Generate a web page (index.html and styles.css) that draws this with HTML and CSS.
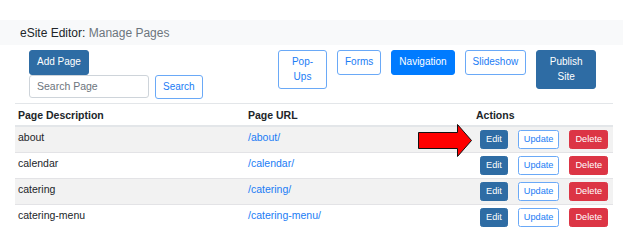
FILE: index.html
```html
<!DOCTYPE html>
<html>
<head>
<meta charset="utf-8">
<title>Manage Pages</title>
<link rel="stylesheet" href="styles.css">
</head>
<body>
<div class="page">
  <div class="topbar"><span class="brand">eSite Editor:</span>&nbsp;<span class="sub">Manage Pages</span></div>
  <div class="toolbar">
    <div class="left">
      <button class="btn btn-dark">Add Page</button>
      <div class="search">
        <input class="search-input" type="text" placeholder="Search Page">
        <button class="btn btn-outline">Search</button>
      </div>
    </div>
    <div class="right">
      <button class="btn btn-outline w-popups">Pop-Ups</button>
      <button class="btn btn-outline">Forms</button>
      <button class="btn btn-primary">Navigation</button>
      <button class="btn btn-outline">Slideshow</button>
      <button class="btn btn-dark w-publish">Publish Site</button>
    </div>
  </div>
  <table class="pages">
    <colgroup><col class="c1"><col class="c2"><col class="c3"></colgroup>
    <thead>
      <tr><th>Page Description</th><th>Page URL</th><th class="th-actions">Actions</th></tr>
    </thead>
    <tbody>
      <tr class="odd"><td>about</td><td><a href="#">/about/</a></td><td class="actions"><div class="acts"><button class="sm sm-dark">Edit</button><button class="sm sm-outline">Update</button><button class="sm sm-danger">Delete</button></div></td></tr>
      <tr><td>calendar</td><td><a href="#">/calendar/</a></td><td class="actions"><div class="acts"><button class="sm sm-dark">Edit</button><button class="sm sm-outline">Update</button><button class="sm sm-danger">Delete</button></div></td></tr>
      <tr class="odd"><td>catering</td><td><a href="#">/catering/</a></td><td class="actions"><div class="acts"><button class="sm sm-dark">Edit</button><button class="sm sm-outline">Update</button><button class="sm sm-danger">Delete</button></div></td></tr>
      <tr><td>catering-menu</td><td><a href="#">/catering-menu/</a></td><td class="actions"><div class="acts"><button class="sm sm-dark">Edit</button><button class="sm sm-outline">Update</button><button class="sm sm-danger">Delete</button></div></td></tr>
    </tbody>
  </table>
  <svg class="arrow" width="55" height="35" viewBox="0 0 55 35">
    <polygon points="0.5,8.5 39.5,8.5 39.5,0.5 53.5,16.5 39.5,32.5 39.5,24.5 0.5,24.5" fill="#ff0000" stroke="#111" stroke-width="1"/>
  </svg>
</div>
</body>
</html>
```
FILE: styles.css
```css
* { box-sizing: border-box; }
body {
  margin: 0;
  font-family: "Liberation Sans", Arial, sans-serif;
  font-size: 10.5px;
  color: #212529;
  background: #fff;
}
.page {
  position: relative;
  padding-top: 20px;
}
.topbar {
  width: 623px;
  height: 25px;
  background: #f8f9fa;
  padding-left: 20px;
  display: flex;
  align-items: center;
  font-size: 12px;
}
.brand { color: #212529; }
.sub { color: #6c757d; }

.toolbar {
  display: flex;
  align-items: flex-start;
  margin-top: 5px;
  padding-left: 29px;
}
.left {
  width: 249px;
  display: flex;
  flex-direction: column;
  align-items: flex-start;
}
.search {
  display: flex;
  gap: 6px;
}
.search-input {
  width: 120px;
  height: 23px;
  border: 1px solid #ced4da;
  border-radius: 3px;
  padding: 0 7px;
  font-family: inherit;
  font-size: 10.5px;
  color: #495057;
  outline: none;
}
.search-input::placeholder { color: #6c757d; }
.right {
  display: flex;
  gap: 10px;
  align-items: flex-start;
}
.btn {
  font-family: inherit;
  font-size: 10px;
  line-height: 14.5px;
  padding: 4px 7px;
  border: 1px solid transparent;
  border-radius: 3px;
  background: #fff;
  text-align: center;
  cursor: pointer;
}
.btn-dark { background: #2e6ca4; border-color: #2e6ca4; color: #fff; }
.btn-primary { background: #007bff; border-color: #007bff; color: #fff; }
.btn-outline { background: #fff; border-color: #6aa9f7; color: #1a7cf5; }
.w-popups { width: 49px; }
.w-publish { width: 60px; }

.pages {
  margin-top: 4px;
  margin-left: 15px;
  width: 598px;
  border-collapse: collapse;
  table-layout: fixed;
}
.c1 { width: 230px; }
.c2 { width: 227px; }
.c3 { width: 141px; }
.pages th {
  text-align: left;
  font-weight: bold;
  line-height: 15px;
  padding: 3px 3px 2px;
  border-top: 1px solid #e3e6e9;
  border-bottom: 2px solid #e3e6e9;
}
.pages th.th-actions { padding-left: 4px; padding-top: 4px; }
.pages td {
  vertical-align: top;
  line-height: 15.75px;
  padding: 3px;
  border-top: 1px solid #e3e3e6;
}
.pages tr.odd td { background: #f2f2f2; }
.pages a { color: #1a7cf5; text-decoration: none; }
.pages td.actions { padding: 3px 3px 3px 8px; }
.acts { display: flex; gap: 10px; }
.sm {
  font-family: inherit;
  font-size: 9.2px;
  line-height: 13px;
  padding: 2px 5px;
  border: 1px solid transparent;
  border-radius: 2.5px;
  cursor: pointer;
}
.sm-dark { background: #2e6ca4; border-color: #2e6ca4; color: #fff; }
.sm-outline { background: #fff; border-color: #6aa9f7; color: #1a7cf5; }
.sm-danger { background: #dc3545; border-color: #dc3545; color: #fff; }

.arrow {
  position: absolute;
  left: 418px;
  top: 124px;
}
```
